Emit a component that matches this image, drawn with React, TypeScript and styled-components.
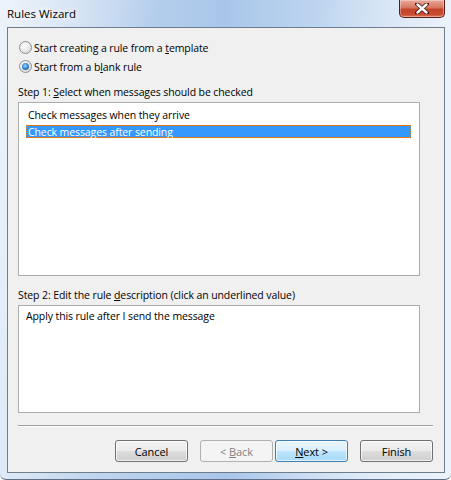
import styled, { createGlobalStyle } from 'styled-components';

const GlobalStyle = createGlobalStyle`
  html, body {
    margin: 0;
    padding: 0;
    background: #ffffff;
  }
  body {
    font-family: "Open Sans", "Liberation Sans", sans-serif;
    font-size: 10.5px;
    letter-spacing: -0.1px;
  }
`;

const Frame = styled.div`
  width: 451px;
  height: 480px;
  box-sizing: border-box;
  display: flex;
  flex-direction: column;
  background:
    linear-gradient(100deg, rgba(255,255,255,0.6) 0%, rgba(255,255,255,0) 30%, rgba(255,255,255,0) 60%, rgba(255,255,255,0.45) 85%),
    linear-gradient(90deg, #d3e2f3 0%, #b3cdec 35%, #a9c6ea 50%, #c2d8f1 75%, #dbe8f6 100%);
  border-bottom: 1px solid #5d6f84;
  border-radius: 0 0 6px 6px;
  overflow: hidden;
`;

const TitleBar = styled.div`
  height: 28px;
  display: flex;
  align-items: flex-start;
  justify-content: space-between;
  padding: 0 6px 0 7px;
`;

const Title = styled.div`
  font-size: 11.5px;
  letter-spacing: 0;
  line-height: 16px;
  margin-top: 6px;
  color: #000;
  text-shadow: 0 0 6px #fff, 0 0 10px #fff, 0 0 12px #fff;
`;

const CloseButton = styled.div`
  width: 46px;
  height: 18px;
  box-sizing: border-box;
  border: 1px solid #5b1e16;
  border-top: none;
  border-radius: 0 0 5px 5px;
  background: linear-gradient(180deg, #e9a89b 0%, #d7765f 45%, #c2442b 55%, #c94b30 85%, #e07c5f 100%);
  box-shadow: inset 0 0 0 1px rgba(255,255,255,0.35);
  display: flex;
  align-items: center;
  justify-content: center;
`;

const Client = styled.div`
  flex: 1;
  margin: 0 6px 6px 7px;
  border: 1px solid #6f7d8c;
  background: #f0f0f0;
  padding: 10px 11px 10px 10px;
  display: flex;
  flex-direction: column;
  color: #000;
`;

const RadioRow = styled.label`
  height: 19px;
  display: flex;
  align-items: center;
  gap: 2px;
  padding-left: 1px;
`;

const RadioCircle = styled.span<{ $checked?: boolean }>`
  width: 13px;
  height: 13px;
  box-sizing: border-box;
  border-radius: 50%;
  border: 1px solid #8f8f8f;
  background: radial-gradient(circle at 40% 35%, #ffffff 0%, #eeeeee 40%, #cfcfcf 100%);
  display: flex;
  align-items: center;
  justify-content: center;
  &::after {
    content: '';
    display: ${(p) => (p.$checked ? 'block' : 'none')};
    width: 7px;
    height: 7px;
    border-radius: 50%;
    background: radial-gradient(circle at 45% 40%, #9fd8ff 0%, #3a8fd6 45%, #0d3f7a 100%);
  }
`;

const StepLabel = styled.div<{ $gap: number }>`
  margin-top: ${(p) => p.$gap}px;
  height: 16px;
  line-height: 16px;
`;

const Box = styled.div<{ $height: number }>`
  margin-top: 2px;
  margin-right: 13px;
  height: ${(p) => p.$height}px;
  box-sizing: border-box;
  border: 1px solid #acacac;
  background: #ffffff;
`;

const List = styled(Box)`
  padding: 5px 8px 0 7px;
  display: flex;
  flex-direction: column;
  gap: 4px;
`;

const ListItem = styled.div<{ $selected?: boolean }>`
  height: 13px;
  line-height: 12px;
  box-sizing: border-box;
  padding-left: 1px;
  white-space: nowrap;
  color: ${(p) => (p.$selected ? '#ffffff' : '#000000')};
  background: ${(p) => (p.$selected ? '#3399ff' : 'transparent')};
  border: 1px ${(p) => (p.$selected ? 'dotted #e8791a' : 'solid transparent')};
`;

const Description = styled(Box)`
  padding: 2px 7px;
  line-height: 16px;
`;

const Separator = styled.div`
  margin-top: 12px;
  height: 1px;
  background: #a0a0a0;
  border-bottom: 1px solid #ffffff;
`;

const ButtonRow = styled.div`
  margin-top: 13px;
  display: flex;
  justify-content: flex-end;
`;

const Button = styled.div<{ $variant?: 'default' | 'disabled'; $gap?: number }>`
  width: 73px;
  height: 22px;
  box-sizing: border-box;
  margin-left: ${(p) => p.$gap ?? 12}px;
  border-radius: 3px;
  display: flex;
  align-items: center;
  justify-content: center;
  font-size: 11px;
  border: 1px solid
    ${(p) => (p.$variant === 'default' ? '#3c7fb1' : p.$variant === 'disabled' ? '#adb2b5' : '#707070')};
  color: ${(p) => (p.$variant === 'disabled' ? '#838383' : '#000000')};
  background: ${(p) =>
    p.$variant === 'default'
      ? 'linear-gradient(180deg, #eaf6fd 0%, #d9f0fc 50%, #bee6fd 50%, #a7d9f5 100%)'
      : p.$variant === 'disabled'
        ? '#f4f4f4'
        : 'linear-gradient(180deg, #f2f2f2 0%, #ebebeb 50%, #dddddd 50%, #cfcfcf 100%)'};
  box-shadow: ${(p) =>
    p.$variant === 'disabled' ? 'none' : 'inset 0 0 0 1px rgba(255,255,255,0.7)'};
`;

const Key = styled.span`
  text-decoration: underline;
`;

export default function App() {
  return (
    <>
      <GlobalStyle />
      <Frame>
        <TitleBar>
          <Title>Rules Wizard</Title>
          <CloseButton>
            <svg width="14" height="11" viewBox="0 0 14 11">
              <path
                d="M2 1 L12 10 M12 1 L2 10"
                stroke="#3a1410"
                strokeWidth="4"
                strokeLinecap="round"
                fill="none"
              />
              <path
                d="M2.5 1.5 L11.5 9.5 M11.5 1.5 L2.5 9.5"
                stroke="#ffffff"
                strokeWidth="2.4"
                strokeLinecap="round"
                fill="none"
              />
            </svg>
          </CloseButton>
        </TitleBar>
        <Client>
          <RadioRow>
            <RadioCircle />
            <span>
              Start creating a rule from a <Key>t</Key>emplate
            </span>
          </RadioRow>
          <RadioRow>
            <RadioCircle $checked />
            <span>
              Start from a b<Key>l</Key>ank rule
            </span>
          </RadioRow>
          <StepLabel $gap={8}>
            Step 1: <Key>S</Key>elect when messages should be checked
          </StepLabel>
          <List $height={174}>
            <ListItem>Check messages when they arrive</ListItem>
            <ListItem $selected>Check messages after sending</ListItem>
          </List>
          <StepLabel $gap={11}>
            Step 2: Edit the rule <Key>d</Key>escription (click an underlined value)
          </StepLabel>
          <Description $height={108}>Apply this rule after I send the message</Description>
          <Separator />
          <ButtonRow>
            <Button>Cancel</Button>
            <Button $variant="disabled">
              <span>
                &lt; <Key>B</Key>ack
              </span>
            </Button>
            <Button $variant="default" $gap={2}>
              <span>
                <Key>N</Key>ext &gt;
              </span>
            </Button>
            <Button>Finish</Button>
          </ButtonRow>
        </Client>
      </Frame>
    </>
  );
}
